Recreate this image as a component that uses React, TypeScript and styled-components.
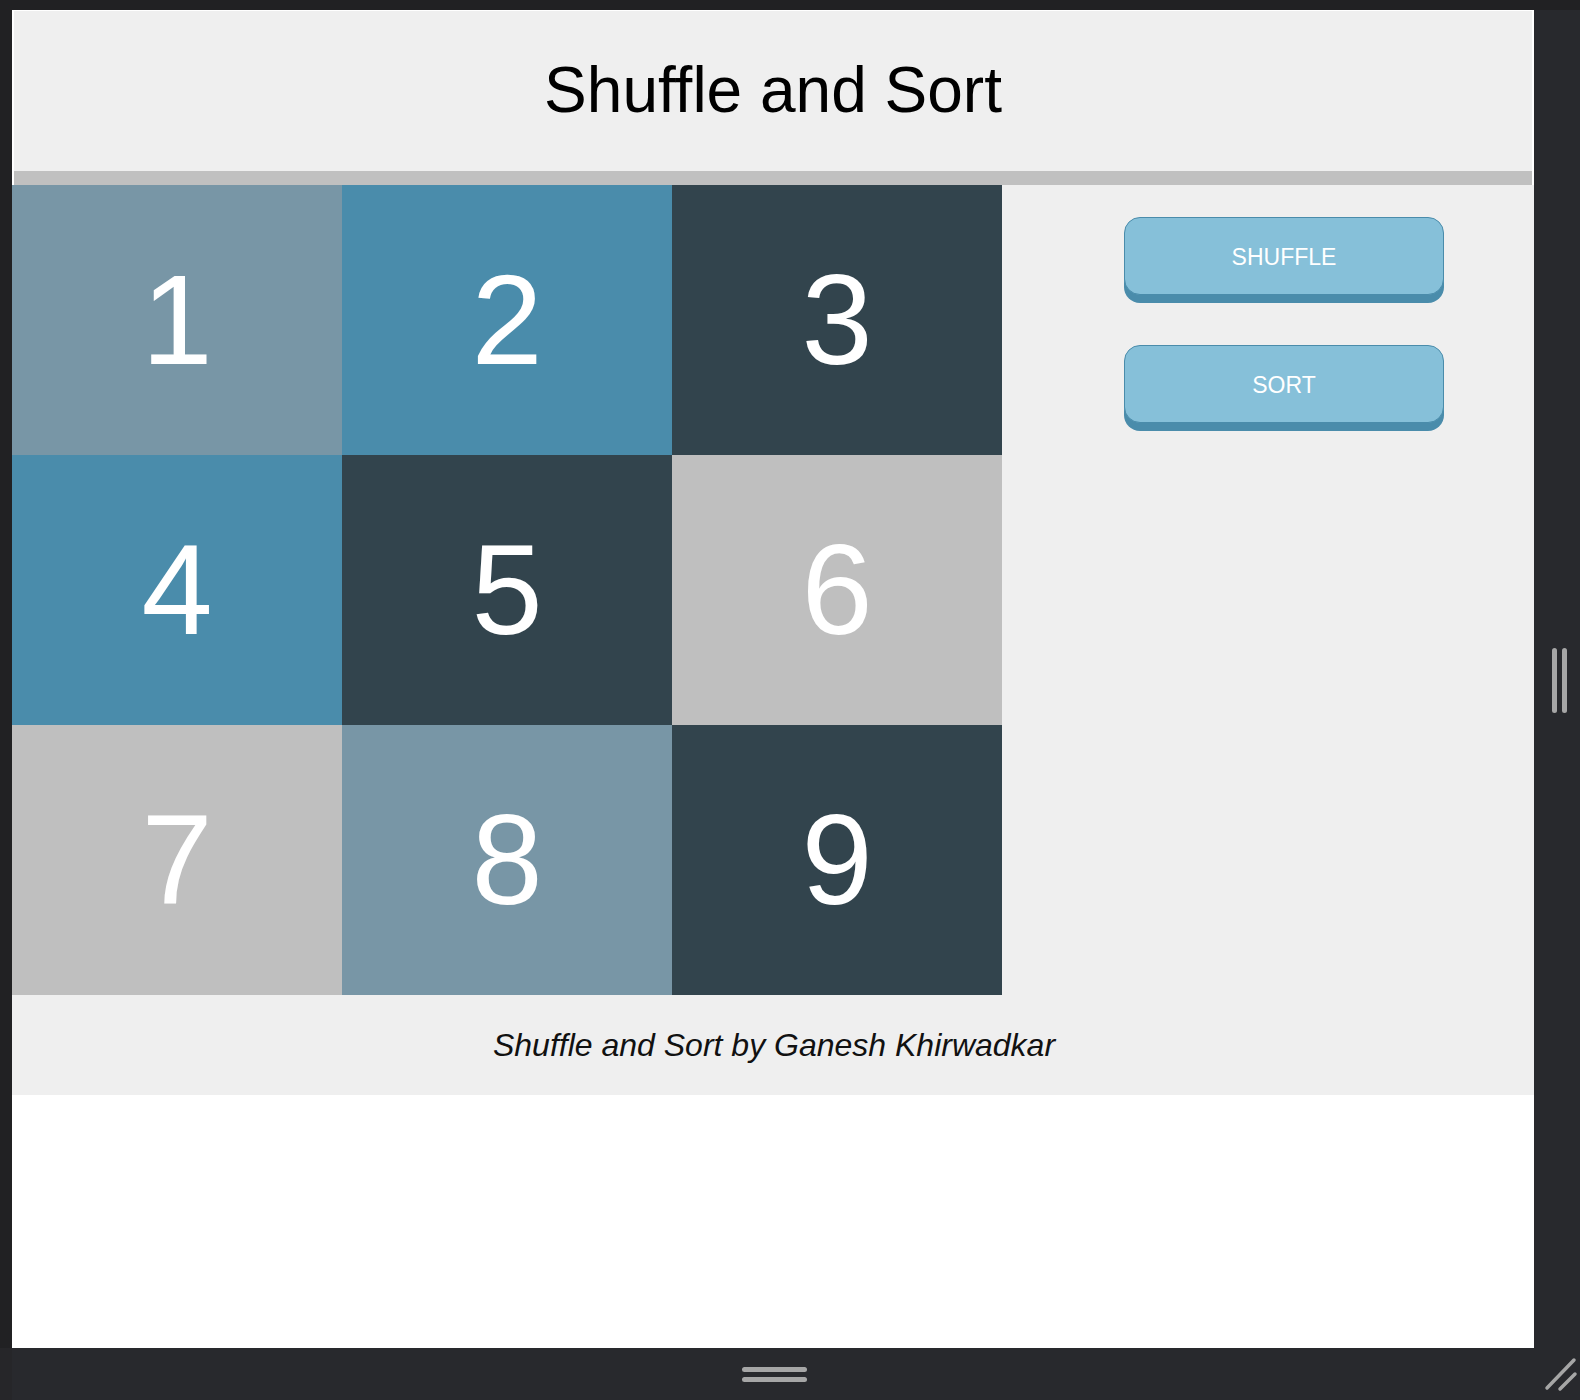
import React, { useState } from "react";
import styled, { createGlobalStyle } from "styled-components";

const GlobalStyle = createGlobalStyle`
  html, body { margin: 0; padding: 0; }
  body { background: #28292d; font-family: "Liberation Sans", Arial, sans-serif; }
  * { box-sizing: border-box; }
`;

const Shell = styled.div`
  width: 1580px;
  height: 1400px;
  display: grid;
  grid-template-columns: 12px 1522px 46px;
  grid-template-rows: 10px 1338px 52px;
  background: #28292d;
`;

const TopBar = styled.div`
  grid-column: 1 / -1;
  background: #212123;
`;

const LeftRail = styled.div`
  background: #212123;
`;

const RightRail = styled.div`
  display: flex;
  align-items: center;
  justify-content: center;
  gap: 5px;
  padding-left: 5px;
  padding-top: 2px;
`;

const VBar = styled.span`
  width: 5px;
  height: 65px;
  border-radius: 3px;
  background: #a6a6a6;
`;

const BottomLeft = styled.div`
  background: #262629;
`;

const BottomHandle = styled.div`
  display: flex;
  flex-direction: column;
  align-items: center;
  justify-content: center;
  gap: 5px;
  padding-left: 2px;
  padding-top: 1px;
`;

const HBar = styled.span`
  width: 65px;
  height: 5px;
  border-radius: 3px;
  background: #a6a6a6;
`;

const Corner = styled.div`
  display: flex;
`;

const Viewport = styled.div`
  background: #ffffff;
  display: flex;
  flex-direction: column;
  overflow: hidden;
`;

const Header = styled.header`
  margin: 1px 2px 0;
  height: 160px;
  background: #efefef;
  display: flex;
  align-items: center;
  justify-content: center;
  padding-bottom: 3px;
`;

const Title = styled.h1`
  margin: 0;
  font-size: 64px;
  line-height: 1;
  font-weight: normal;
  color: #000;
`;

const Divider = styled.div`
  margin: 0 2px;
  height: 14px;
  background: #c0c0c0;
`;

const Main = styled.main`
  display: flex;
  background: #efefef;
`;

const Board = styled.div`
  display: grid;
  grid-template-columns: repeat(3, 330px);
  grid-template-rows: repeat(3, 270px);
`;

const Tile = styled.div<{ $bg: string }>`
  background: ${(p) => p.$bg};
  display: flex;
  align-items: center;
  justify-content: center;
  color: #ffffff;
  font-size: 128px;
  line-height: 1;
`;

const Controls = styled.div`
  display: flex;
  flex-direction: column;
  gap: 50px;
  padding: 32px 0 0 122px;
`;

const ActionButton = styled.button`
  width: 320px;
  height: 78px;
  border: 1px solid #4a8cab;
  border-radius: 16px;
  background: #86c0d9;
  box-shadow: 0 8px 0 #4a8cab;
  color: #ffffff;
  font-family: "Liberation Sans", Arial, sans-serif;
  font-size: 23px;
  cursor: pointer;
  padding: 3px 0 0;
  &:active {
    transform: translateY(4px);
    box-shadow: 0 4px 0 #4a8cab;
  }
`;

const Footer = styled.footer`
  height: 100px;
  background: #efefef;
  display: flex;
  align-items: center;
  justify-content: center;
  padding-left: 2px;
`;

const Credit = styled.p`
  margin: 0;
  font-size: 32px;
  font-style: italic;
  color: #111;
`;

type TileData = { n: number; c: string };

const TILES: TileData[] = [
  { n: 1, c: "#7896a6" },
  { n: 2, c: "#4a8cab" },
  { n: 3, c: "#32444d" },
  { n: 4, c: "#4a8cab" },
  { n: 5, c: "#32444d" },
  { n: 6, c: "#bfbfbf" },
  { n: 7, c: "#bfbfbf" },
  { n: 8, c: "#7896a6" },
  { n: 9, c: "#32444d" },
];

export default function App() {
  const [tiles, setTiles] = useState<TileData[]>(TILES);

  const shuffle = () => {
    const next = [...tiles];
    for (let i = next.length - 1; i > 0; i--) {
      const j = Math.floor(Math.random() * (i + 1));
      [next[i], next[j]] = [next[j], next[i]];
    }
    setTiles(next);
  };

  const sort = () => setTiles([...tiles].sort((a, b) => a.n - b.n));

  return (
    <>
      <GlobalStyle />
      <Shell>
        <TopBar />
        <LeftRail />
        <Viewport>
          <Header>
            <Title>Shuffle and Sort</Title>
          </Header>
          <Divider />
          <Main>
            <Board>
              {tiles.map((t) => (
                <Tile key={t.n} $bg={t.c}>
                  {t.n}
                </Tile>
              ))}
            </Board>
            <Controls>
              <ActionButton onClick={shuffle}>SHUFFLE</ActionButton>
              <ActionButton onClick={sort}>SORT</ActionButton>
            </Controls>
          </Main>
          <Footer>
            <Credit>Shuffle and Sort by Ganesh Khirwadkar</Credit>
          </Footer>
        </Viewport>
        <RightRail>
          <VBar />
          <VBar />
        </RightRail>
        <BottomLeft />
        <BottomHandle>
          <HBar />
          <HBar />
        </BottomHandle>
        <Corner>
          <svg width="46" height="52" viewBox="0 0 46 52">
            <line x1="13" y1="40" x2="40" y2="12" stroke="#a6a6a6" strokeWidth="3.5" strokeLinecap="round" />
            <line x1="26" y1="41" x2="41" y2="26" stroke="#a6a6a6" strokeWidth="3.5" strokeLinecap="round" />
          </svg>
        </Corner>
      </Shell>
    </>
  );
}
